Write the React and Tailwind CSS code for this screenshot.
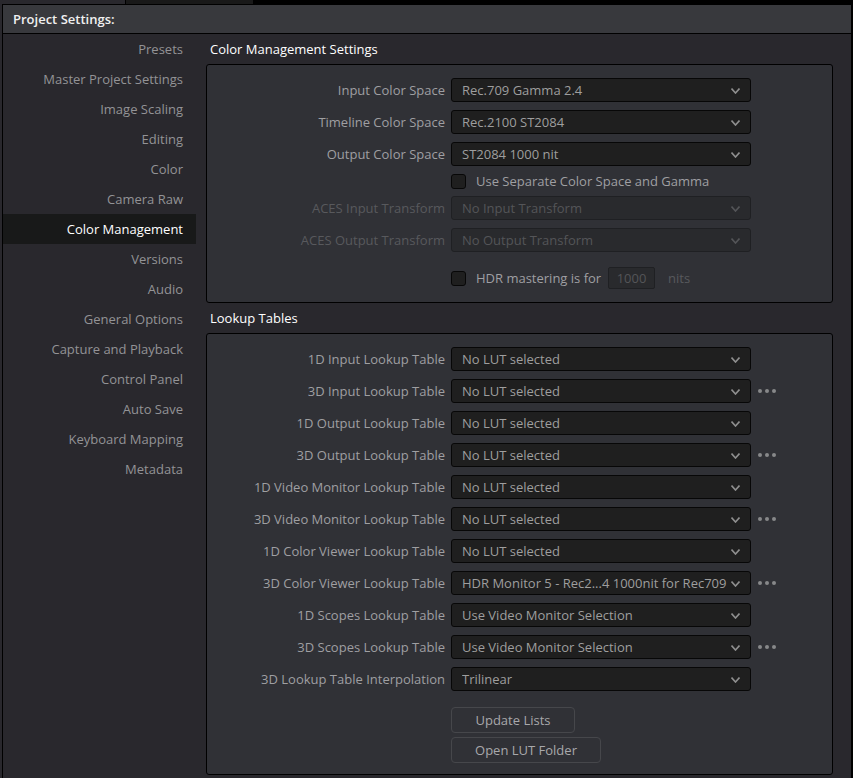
import React, { useState } from "react";
import clsx from "clsx";

const sections = [
  "Presets",
  "Master Project Settings",
  "Image Scaling",
  "Editing",
  "Color",
  "Camera Raw",
  "Color Management",
  "Versions",
  "Audio",
  "General Options",
  "Capture and Playback",
  "Control Panel",
  "Auto Save",
  "Keyboard Mapping",
  "Metadata",
];

const colorSpaces = [
  { id: "input-space", label: "Input Color Space", value: "Rec.709 Gamma 2.4" },
  { id: "timeline-space", label: "Timeline Color Space", value: "Rec.2100 ST2084" },
  { id: "output-space", label: "Output Color Space", value: "ST2084 1000 nit" },
];

const acesTransforms = [
  { id: "aces-input", label: "ACES Input Transform", value: "No Input Transform" },
  { id: "aces-output", label: "ACES Output Transform", value: "No Output Transform" },
];

const lookupTables = [
  { id: "lut-1d-input", label: "1D Input Lookup Table", value: "No LUT selected" },
  { id: "lut-3d-input", label: "3D Input Lookup Table", value: "No LUT selected", more: true },
  { id: "lut-1d-output", label: "1D Output Lookup Table", value: "No LUT selected" },
  { id: "lut-3d-output", label: "3D Output Lookup Table", value: "No LUT selected", more: true },
  { id: "lut-1d-monitor", label: "1D Video Monitor Lookup Table", value: "No LUT selected" },
  { id: "lut-3d-monitor", label: "3D Video Monitor Lookup Table", value: "No LUT selected", more: true },
  { id: "lut-1d-viewer", label: "1D Color Viewer Lookup Table", value: "No LUT selected" },
  {
    id: "lut-3d-viewer",
    label: "3D Color Viewer Lookup Table",
    value: "HDR Monitor 5 - Rec2...4 1000nit for Rec709",
    more: true,
  },
  { id: "lut-1d-scopes", label: "1D Scopes Lookup Table", value: "Use Video Monitor Selection" },
  { id: "lut-3d-scopes", label: "3D Scopes Lookup Table", value: "Use Video Monitor Selection", more: true },
  { id: "lut-interpolation", label: "3D Lookup Table Interpolation", value: "Trilinear" },
];

const SelectRow = ({ id, label, value, more, disabled }) => (
  <div className="flex items-center">
    <label
      htmlFor={id}
      className={clsx("w-[238px] shrink-0 text-right", disabled ? "text-[#58595d]" : "text-[#9f9fa2]")}
    >
      {label}
    </label>
    <div className="relative ml-1.5 w-[300px]">
      <select
        id={id}
        disabled={disabled}
        defaultValue={value}
        className={clsx(
          "block h-6 w-full appearance-none rounded-[3px] border pl-2.5 pr-5 leading-5 opacity-100 outline-none",
          disabled
            ? "border-[#1f2023] bg-[#292a2d] text-[#545558]"
            : "border-[#070707] bg-[#1f1f1f] text-[#9e9e9e]"
        )}
      >
        <option>{value}</option>
      </select>
      <svg
        viewBox="0 0 9 6"
        className={clsx(
          "pointer-events-none absolute right-[11px] top-[10px] h-1.5 w-[9px]",
          disabled ? "text-[#545558]" : "text-[#8f8f8f]"
        )}
        fill="none"
        stroke="currentColor"
        strokeWidth="1.6"
      >
        <path d="M0.5 0.5 L4.5 5 L8.5 0.5" />
      </svg>
    </div>
    {more && (
      <button type="button" aria-label={`${label} options`} className="ml-[7px] flex gap-[3px]">
        <span className="size-1 rounded-full bg-[#87888a]" />
        <span className="size-1 rounded-full bg-[#87888a]" />
        <span className="size-1 rounded-full bg-[#87888a]" />
      </button>
    )}
  </div>
);

const CheckBox = ({ id, checked, onChange }) => (
  <input
    id={id}
    type="checkbox"
    checked={checked}
    onChange={(e) => onChange(e.target.checked)}
    className="size-[15px] shrink-0 appearance-none rounded-[3px] border border-[#070707] bg-[#1f1f1f] checked:bg-[#9f9fa2]"
  />
);

const App = () => {
  const [active, setActive] = useState("Color Management");
  const [separate, setSeparate] = useState(false);
  const [mastering, setMastering] = useState(false);
  const [nits, setNits] = useState("1000");

  return (
    <div className="flex min-h-screen flex-col bg-black font-['Open_Sans','Noto_Sans',sans-serif] text-[13px] leading-5">
      {/* Window tabs behind the dialog */}
      <div className="flex h-1">
        <div className="w-[125px] bg-[#29282d]" />
        <div className="ml-px w-[127px] bg-[#191919]" />
      </div>

      <div className="flex flex-1 flex-col bg-[#29282d] pl-0.5">
        <div className="flex flex-1 flex-col border-l border-r-2 border-t border-black">
          <header className="flex h-[29px] items-center border-b border-black bg-[#38393d] px-2.5">
            <h1 className="font-semibold text-[#f0f0f0]">Project Settings:</h1>
          </header>

          <div className="flex flex-1">
            <nav className="flex w-[193px] shrink-0 flex-col">
              {sections.map((name) => (
                <button
                  key={name}
                  type="button"
                  onClick={() => setActive(name)}
                  className={clsx(
                    "h-[30px] pr-[13px] text-right",
                    active === name ? "bg-[#181919] text-white" : "text-[#939396]"
                  )}
                >
                  {name}
                </button>
              ))}
            </nav>

            <main className="min-w-0 flex-1 pb-[3px] pl-2.5 pr-[18px]">
              <h2 className="px-1 py-[5px] text-white">Color Management Settings</h2>
              <section className="rounded-[3px] border border-black bg-[#303136] py-[13px]">
                <div className="flex flex-col gap-2">
                  {colorSpaces.map((row) => (
                    <SelectRow key={row.id} {...row} />
                  ))}
                </div>

                <div className="my-[7px] flex h-4 items-center pl-[244px]">
                  <CheckBox id="separate" checked={separate} onChange={setSeparate} />
                  <label htmlFor="separate" className="ml-2.5 text-[#9f9fa2]">
                    Use Separate Color Space and Gamma
                  </label>
                </div>

                <div className="flex flex-col gap-2">
                  {acesTransforms.map((row) => (
                    <SelectRow key={row.id} {...row} disabled />
                  ))}
                </div>

                <div className="mt-[15px] flex h-[22px] items-center pl-[244px]">
                  <CheckBox id="mastering" checked={mastering} onChange={setMastering} />
                  <label htmlFor="mastering" className="ml-2.5 w-[122px] whitespace-nowrap text-[#9f9fa2]">
                    HDR mastering is for
                  </label>
                  <input
                    type="text"
                    id="nits"
                    value={nits}
                    onChange={(e) => setNits(e.target.value)}
                    disabled={!mastering}
                    className="ml-2.5 h-[22px] w-[47px] rounded-[2px] border border-[#1f2023] bg-[#292a2d] text-center text-[#545558]"
                  />
                  <label htmlFor="nits" className="ml-[13px] text-[#58595d]">
                    nits
                  </label>
                </div>
              </section>

              <h2 className="px-1 py-[5px] text-white">Lookup Tables</h2>
              <section className="rounded-[3px] border border-black bg-[#303136] pb-[11px] pt-[13px]">
                <div className="flex flex-col gap-2">
                  {lookupTables.map((row) => (
                    <SelectRow key={row.id} {...row} />
                  ))}
                </div>

                <div className="mt-4 flex flex-col items-start gap-1 pl-[244px]">
                  <button
                    type="button"
                    className="h-[26px] w-[124px] rounded-[4px] border border-[#46474b] text-center text-[#a8a8ab]"
                  >
                    Update Lists
                  </button>
                  <button
                    type="button"
                    className="h-[26px] w-[150px] rounded-[4px] border border-[#46474b] text-center text-[#a8a8ab]"
                  >
                    Open LUT Folder
                  </button>
                </div>
              </section>
            </main>
          </div>
        </div>
      </div>
    </div>
  );
};

export default App;
